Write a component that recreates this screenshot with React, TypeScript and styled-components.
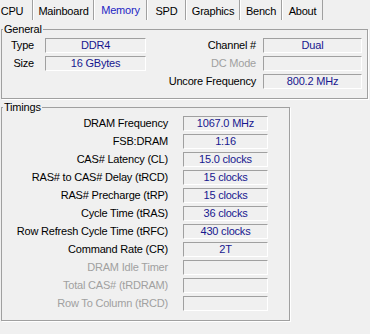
import { Fragment } from 'react';
import styled, { createGlobalStyle } from 'styled-components';

const GlobalStyle = createGlobalStyle`
  html, body {
    margin: 0;
    padding: 0;
    background: #f0f0f0;
  }
  body {
    font-family: 'Liberation Sans', Arial, sans-serif;
    font-size: 11px;
    overflow: hidden;
  }
`;

type Timing = { label: string; value: string; disabled?: boolean };

const tabs = [
  { name: 'CPU', width: 42 },
  { name: 'Mainboard', width: 61 },
  { name: 'Memory', width: 53 },
  { name: 'SPD', width: 39 },
  { name: 'Graphics', width: 54 },
  { name: 'Bench', width: 42 },
  { name: 'About', width: 41 },
];

const timings: Timing[] = [
  { label: 'DRAM Frequency', value: '1067.0 MHz' },
  { label: 'FSB:DRAM', value: '1:16' },
  { label: 'CAS# Latency (CL)', value: '15.0 clocks' },
  { label: 'RAS# to CAS# Delay (tRCD)', value: '15 clocks' },
  { label: 'RAS# Precharge (tRP)', value: '15 clocks' },
  { label: 'Cycle Time (tRAS)', value: '36 clocks' },
  { label: 'Row Refresh Cycle Time (tRFC)', value: '430 clocks' },
  { label: 'Command Rate (CR)', value: '2T' },
  { label: 'DRAM Idle Timer', value: '', disabled: true },
  { label: 'Total CAS# (tRDRAM)', value: '', disabled: true },
  { label: 'Row To Column (tRCD)', value: '', disabled: true },
];

const Window = styled.div`
  width: 370px;
  height: 334px;
  overflow: hidden;
  background: #f0f0f0;
  color: #000;
  letter-spacing: -0.2px;
`;

const TabStrip = styled.div`
  display: flex;
  height: 20px;
  margin-left: -9px;
`;

const Tab = styled.div<{ $active?: boolean; $w: number }>`
  box-sizing: border-box;
  width: ${(p) => p.$w}px;
  height: 20px;
  padding-top: ${(p) => (p.$active ? 4 : 5)}px;
  line-height: 13px;
  text-align: center;
  border-left: 1px solid #fff;
  border-right: 1px solid #a0a0a0;
  color: ${(p) => (p.$active ? '#1f1fc4' : '#000')};
  white-space: nowrap;
`;

const Group = styled.fieldset<{ $w: number; $top: number }>`
  box-sizing: border-box;
  width: ${(p) => p.$w}px;
  margin: ${(p) => p.$top}px 0 0 1px;
  padding: 2px 5px 9px 0;
  border: 1px solid #a0a0a0;
  box-shadow: 1px 1px 0 #fff;
  min-width: 0;
`;

const Caption = styled.legend`
  margin-left: 1px;
  padding: 0 1px;
  line-height: 13px;
  height: 13px;
  color: #000;
`;

const GeneralGrid = styled.div`
  display: grid;
  grid-template-columns: 43px 101px 1fr 99px;
  row-gap: 3px;
`;

const TimingsGrid = styled.div`
  display: grid;
  grid-template-columns: 181px 85px;
  row-gap: 3px;
`;

const Label = styled.div<{ $pad: number; $disabled?: boolean }>`
  text-align: right;
  white-space: nowrap;
  line-height: 15px;
  height: 15px;
  padding-right: ${(p) => p.$pad}px;
  color: ${(p) => (p.$disabled ? '#a0a0a0' : '#000')};
`;

const Value = styled.div`
  box-sizing: border-box;
  height: 15px;
  line-height: 13px;
  text-align: center;
  white-space: nowrap;
  color: #17178f;
  border-top: 1px solid #a0a0a0;
  border-left: 1px solid #a0a0a0;
  border-right: 1px solid #fff;
  border-bottom: 1px solid #fff;
`;

const Empty = styled.div``;

export default function App() {
  return (
    <Window>
      <GlobalStyle />
      <TabStrip>
        {tabs.map((t) => (
          <Tab key={t.name} $w={t.width} $active={t.name === 'Memory'}>
            {t.name}
          </Tab>
        ))}
      </TabStrip>

      <Group $w={367} $top={3}>
        <Caption>General</Caption>
        <GeneralGrid>
          <Label $pad={11}>Type</Label>
          <Value>DDR4</Value>
          <Label $pad={7}>Channel #</Label>
          <Value>Dual</Value>

          <Label $pad={11}>Size</Label>
          <Value>16 GBytes</Value>
          <Label $pad={7} $disabled>
            DC Mode
          </Label>
          <Value />

          <Empty />
          <Empty />
          <Label $pad={7}>Uncore Frequency</Label>
          <Value>800.2 MHz</Value>
        </GeneralGrid>
      </Group>

      <Group $w={289} $top={2}>
        <Caption>Timings</Caption>
        <TimingsGrid>
          {timings.map((t) => (
            <Fragment key={t.label}>
              <Label $pad={15} $disabled={t.disabled}>
                {t.label}
              </Label>
              <Value>{t.value}</Value>
            </Fragment>
          ))}
        </TimingsGrid>
      </Group>
    </Window>
  );
}
